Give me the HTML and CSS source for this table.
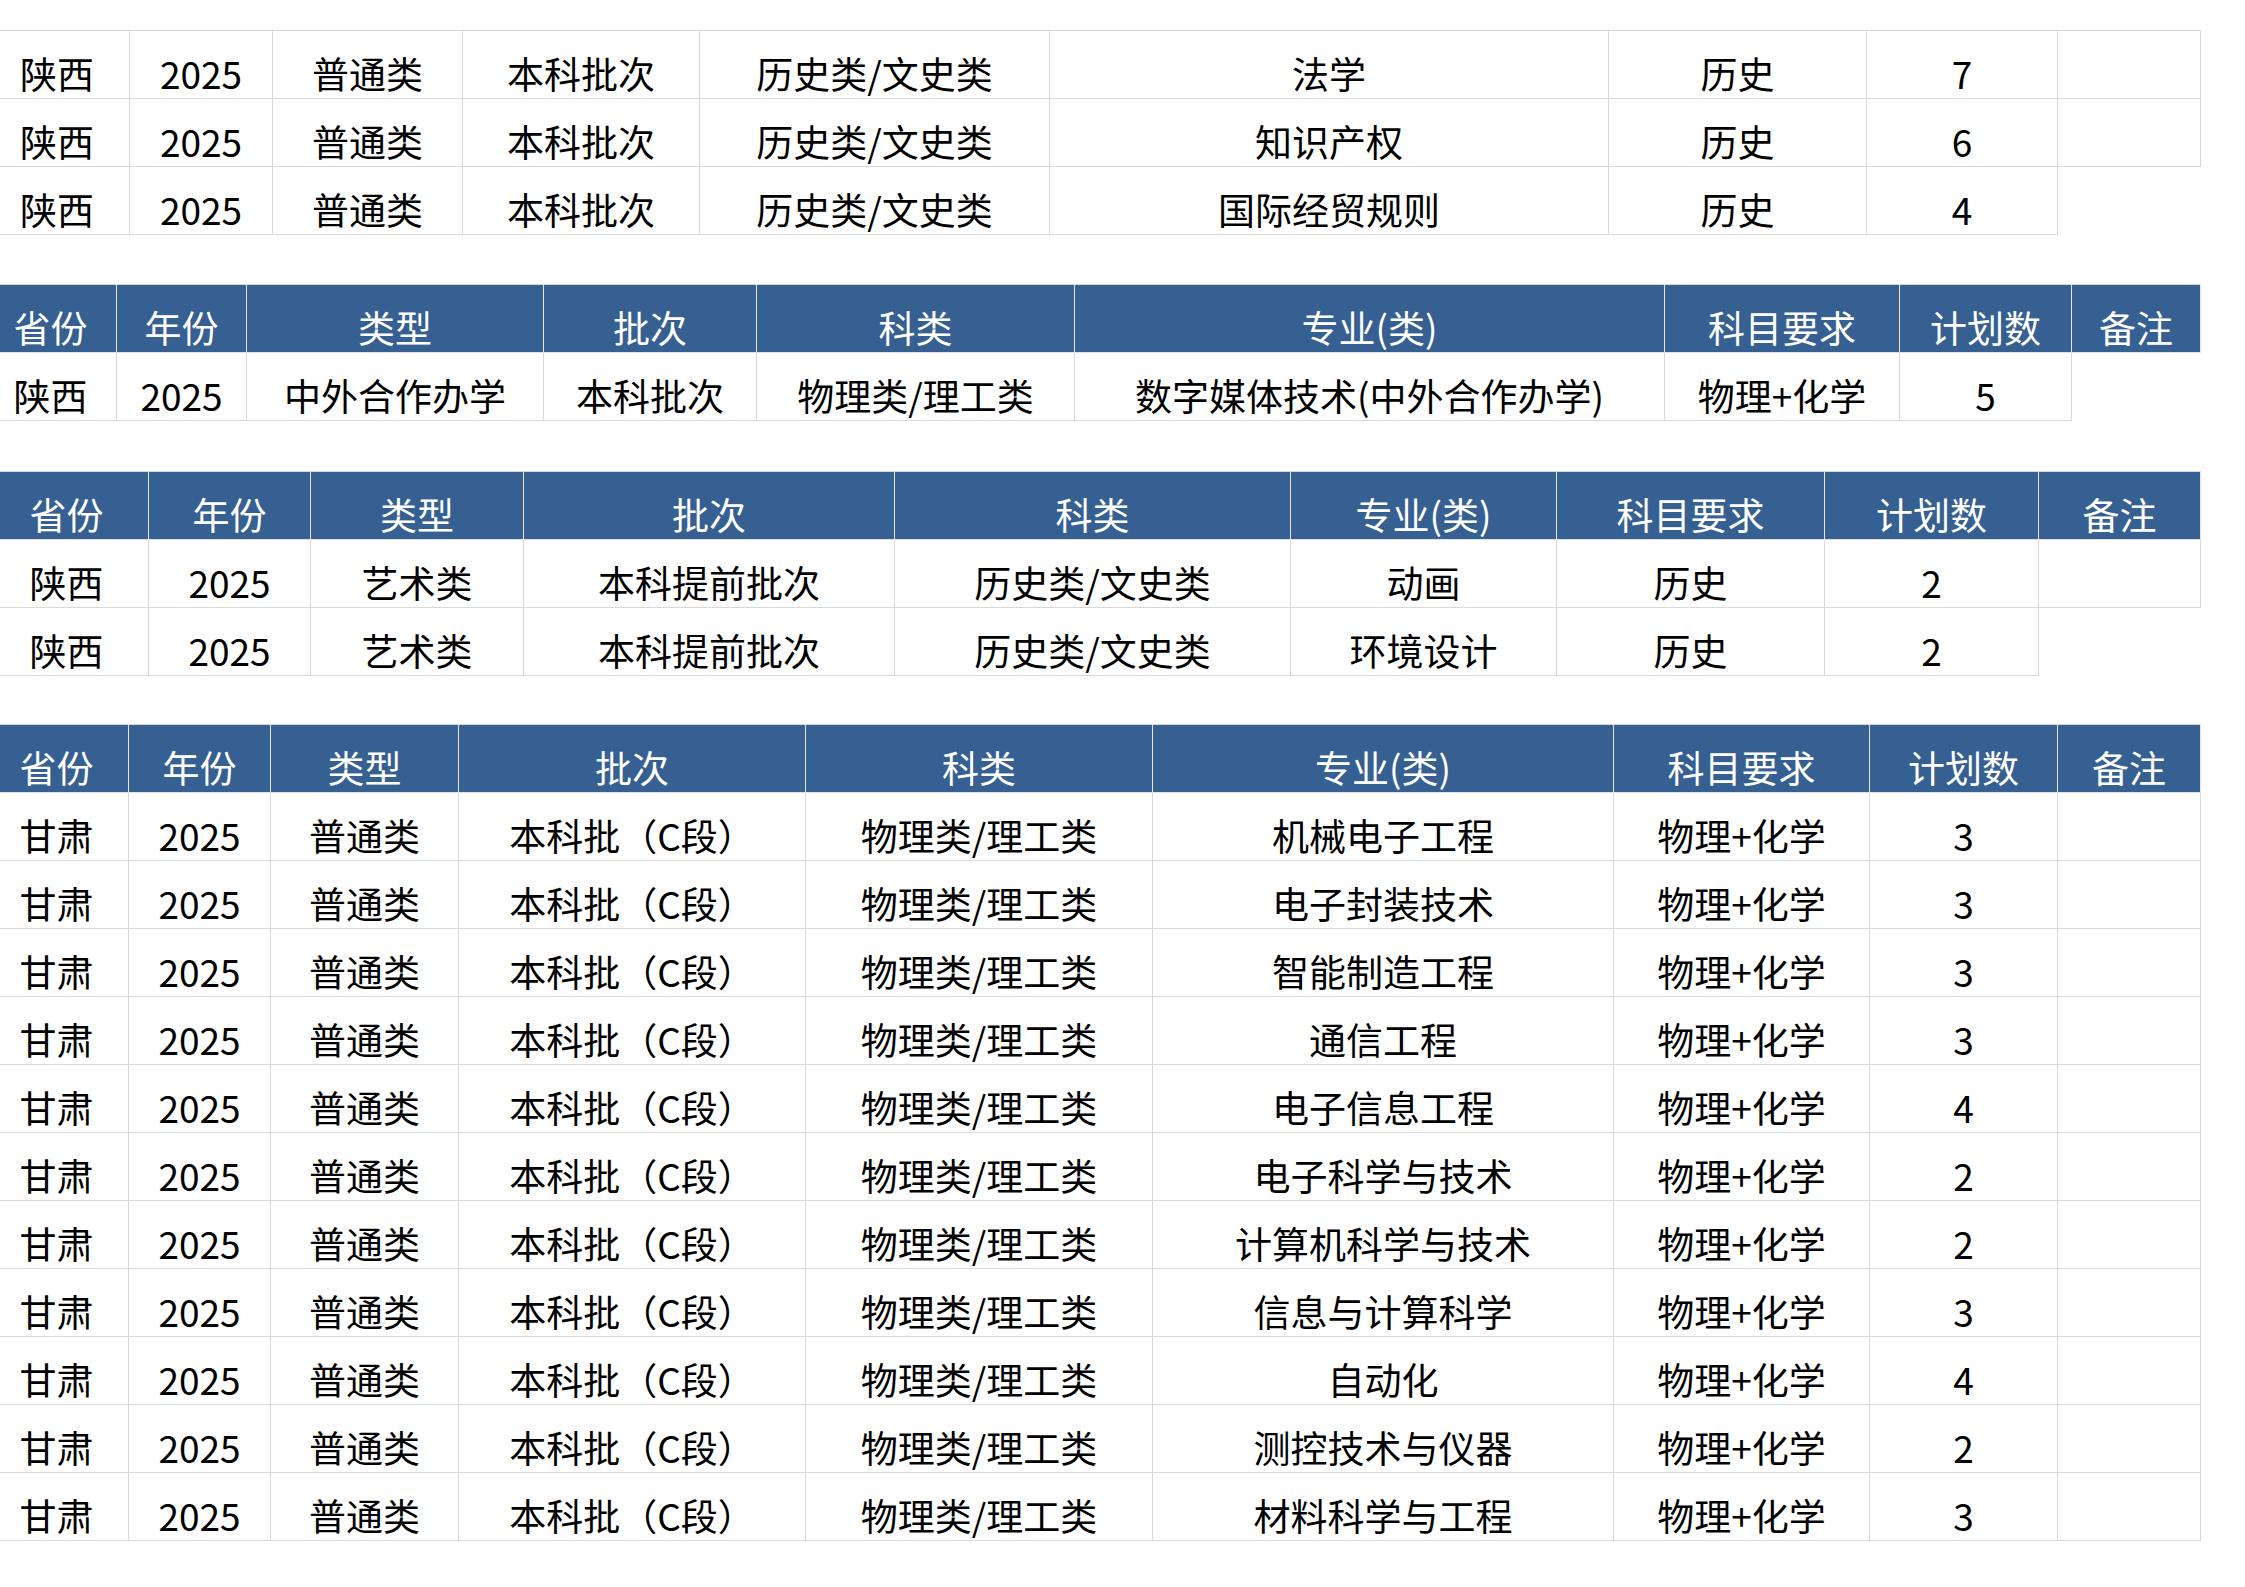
FILE: index.html
```html
<!DOCTYPE html>
<html lang="zh-CN">
<head>
<meta charset="utf-8">
<title>招生计划</title>
<link rel="stylesheet" href="styles.css">
</head>
<body>
<div class="sheet">
  <table class="grid t1">
    <colgroup><col class="c145"><col class="c143"><col class="c190"><col class="c237"><col class="c350"><col class="c559"><col class="c258"><col class="c191"><col class="c143"></colgroup>
    <tbody>
      <tr><td>陕西</td><td>2025</td><td>普通类</td><td>本科批次</td><td>历史类/文史类</td><td>法学</td><td>历史</td><td>7</td><td></td></tr>
      <tr><td>陕西</td><td>2025</td><td>普通类</td><td>本科批次</td><td>历史类/文史类</td><td>知识产权</td><td>历史</td><td>6</td><td></td></tr>
      <tr><td>陕西</td><td>2025</td><td>普通类</td><td>本科批次</td><td>历史类/文史类</td><td>国际经贸规则</td><td>历史</td><td>4</td><td class="blank"></td></tr>
    </tbody>
  </table>

  <table class="grid t2">
    <colgroup><col class="c132"><col class="c130"><col class="c297"><col class="c213"><col class="c318"><col class="c590"><col class="c235"><col class="c172"><col class="c129"></colgroup>
    <thead>
      <tr><th>省份</th><th>年份</th><th>类型</th><th>批次</th><th>科类</th><th>专业(类)</th><th>科目要求</th><th>计划数</th><th>备注</th></tr>
    </thead>
    <tbody>
      <tr><td>陕西</td><td>2025</td><td>中外合作办学</td><td>本科批次</td><td>物理类/理工类</td><td>数字媒体技术(中外合作办学)</td><td>物理+化学</td><td>5</td><td class="blank"></td></tr>
    </tbody>
  </table>

  <table class="grid t3">
    <colgroup><col class="c164"><col class="c162"><col class="c213"><col class="c371"><col class="c396"><col class="c266"><col class="c268"><col class="c214"><col class="c162"></colgroup>
    <thead>
      <tr><th>省份</th><th>年份</th><th>类型</th><th>批次</th><th>科类</th><th>专业(类)</th><th>科目要求</th><th>计划数</th><th>备注</th></tr>
    </thead>
    <tbody>
      <tr><td>陕西</td><td>2025</td><td>艺术类</td><td>本科提前批次</td><td>历史类/文史类</td><td>动画</td><td>历史</td><td>2</td><td></td></tr>
      <tr><td>陕西</td><td>2025</td><td>艺术类</td><td>本科提前批次</td><td>历史类/文史类</td><td>环境设计</td><td>历史</td><td>2</td><td class="blank"></td></tr>
    </tbody>
  </table>

  <table class="grid t4">
    <colgroup><col class="c144"><col class="c142"><col class="c188"><col class="c347"><col class="c347"><col class="c461"><col class="c256"><col class="c188"><col class="c143"></colgroup>
    <thead>
      <tr><th>省份</th><th>年份</th><th>类型</th><th>批次</th><th>科类</th><th>专业(类)</th><th>科目要求</th><th>计划数</th><th>备注</th></tr>
    </thead>
    <tbody>
      <tr><td>甘肃</td><td>2025</td><td>普通类</td><td>本科批（C段）</td><td>物理类/理工类</td><td>机械电子工程</td><td>物理+化学</td><td>3</td><td></td></tr>
      <tr><td>甘肃</td><td>2025</td><td>普通类</td><td>本科批（C段）</td><td>物理类/理工类</td><td>电子封装技术</td><td>物理+化学</td><td>3</td><td></td></tr>
      <tr><td>甘肃</td><td>2025</td><td>普通类</td><td>本科批（C段）</td><td>物理类/理工类</td><td>智能制造工程</td><td>物理+化学</td><td>3</td><td></td></tr>
      <tr><td>甘肃</td><td>2025</td><td>普通类</td><td>本科批（C段）</td><td>物理类/理工类</td><td>通信工程</td><td>物理+化学</td><td>3</td><td></td></tr>
      <tr><td>甘肃</td><td>2025</td><td>普通类</td><td>本科批（C段）</td><td>物理类/理工类</td><td>电子信息工程</td><td>物理+化学</td><td>4</td><td></td></tr>
      <tr><td>甘肃</td><td>2025</td><td>普通类</td><td>本科批（C段）</td><td>物理类/理工类</td><td>电子科学与技术</td><td>物理+化学</td><td>2</td><td></td></tr>
      <tr><td>甘肃</td><td>2025</td><td>普通类</td><td>本科批（C段）</td><td>物理类/理工类</td><td>计算机科学与技术</td><td>物理+化学</td><td>2</td><td></td></tr>
      <tr><td>甘肃</td><td>2025</td><td>普通类</td><td>本科批（C段）</td><td>物理类/理工类</td><td>信息与计算科学</td><td>物理+化学</td><td>3</td><td></td></tr>
      <tr><td>甘肃</td><td>2025</td><td>普通类</td><td>本科批（C段）</td><td>物理类/理工类</td><td>自动化</td><td>物理+化学</td><td>4</td><td></td></tr>
      <tr><td>甘肃</td><td>2025</td><td>普通类</td><td>本科批（C段）</td><td>物理类/理工类</td><td>测控技术与仪器</td><td>物理+化学</td><td>2</td><td></td></tr>
      <tr><td>甘肃</td><td>2025</td><td>普通类</td><td>本科批（C段）</td><td>物理类/理工类</td><td>材料科学与工程</td><td>物理+化学</td><td>3</td><td></td></tr>
    </tbody>
  </table>
</div>
</body>
</html>
```

FILE: styles.css
```css
html, body {
  margin: 0;
  padding: 0;
  background: #ffffff;
}

body {
  font-family: "Noto Sans CJK SC", "Noto Sans", sans-serif;
  font-size: 37px;
  color: #000000;
  overflow: hidden;
}

.sheet {
  margin-left: -15px;
  padding-top: 30px;
}

.grid {
  border-collapse: separate;
  border-spacing: 0;
  table-layout: fixed;
  width: 2216px;
  border-top: 1px solid #d6d6d6;
}

.t2 { margin-top: 49px; }
.t3 { margin-top: 50px; }
.t4 { margin-top: 48px; }

.grid td,
.grid th {
  box-sizing: border-box;
  height: 68px;
  padding: 0 0 6px 0;
  border-right: 1px solid #d9d9d9;
  border-bottom: 1px solid #d9d9d9;
  vertical-align: bottom;
  text-align: center;
  line-height: 37px;
  white-space: nowrap;
  overflow: hidden;
}

.grid th {
  background: #366092;
  color: #ffffff;
  font-weight: 400;
  border-right-color: #e4e8ee;
  border-bottom-color: #dfe3e8;
}

.grid td.blank {
  border-right: none;
  border-bottom: none;
}

.c129 { width: 129px; }
.c130 { width: 130px; }
.c132 { width: 132px; }
.c142 { width: 142px; }
.c143 { width: 143px; }
.c144 { width: 144px; }
.c145 { width: 145px; }
.c162 { width: 162px; }
.c164 { width: 164px; }
.c172 { width: 172px; }
.c188 { width: 188px; }
.c190 { width: 190px; }
.c191 { width: 191px; }
.c213 { width: 213px; }
.c214 { width: 214px; }
.c235 { width: 235px; }
.c237 { width: 237px; }
.c256 { width: 256px; }
.c258 { width: 258px; }
.c266 { width: 266px; }
.c268 { width: 268px; }
.c297 { width: 297px; }
.c318 { width: 318px; }
.c347 { width: 347px; }
.c350 { width: 350px; }
.c371 { width: 371px; }
.c396 { width: 396px; }
.c461 { width: 461px; }
.c559 { width: 559px; }
.c590 { width: 590px; }
```
